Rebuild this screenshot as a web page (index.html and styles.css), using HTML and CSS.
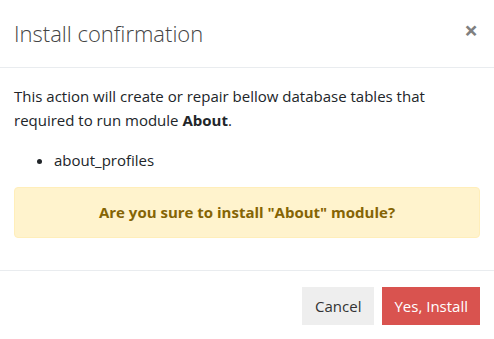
FILE: index.html
```html
<!DOCTYPE html>
<html lang="en">
<head>
    <meta charset="UTF-8">
    <title>Install confirmation</title>
    <link rel="stylesheet" href="styles.css">
</head>
<body>

<div class="modal">
    <div class="modal-header">
        <h5 class="modal-title">Install confirmation</h5>
        <span class="close">&times;</span>
    </div>
    <div class="modal-body">
        <p>This action will create or repair bellow database tables that required to run module <b>About</b>.</p>
        <ul class="tables">
            <li>about_profiles</li>
        </ul>
        <div class="alert">Are you sure to install "About" module?</div>
    </div>
    <div class="modal-footer">
        <div class="btn btn-cancel">Cancel</div>
        <div class="btn btn-danger">Yes, Install</div>
    </div>
</div>

</body>
</html>
```

FILE: styles.css
```css
html,body{
    margin: 0;
    padding: 0;
}
body{
    font-family: "Open Sans", "Noto Sans", sans-serif;
    font-size: 15px;
    line-height: 24px;
    color: #212529;
    background: #fff;
}

.modal{
    width: 494px;
}

.modal-header{
    display: flex;
    align-items: flex-start;
    justify-content: space-between;
    padding: 16px 14px 16px 14px;
    border-bottom: 1px solid #e9ecef;
}

.modal-title{
    margin: 0;
    font-size: 22px;
    font-weight: 300;
    line-height: 35px;
    color: #444;
}

.close{
    font-size: 24px;
    font-weight: 700;
    line-height: 28px;
    color: #808080;
    padding-right: 2px;
}

.modal-body{
    padding: 16px 14px;
}

.modal-body p{
    margin: 0 0 16px;
}

.tables{
    margin: 0 0 15px;
    padding-left: 40px;
}

.alert{
    margin-bottom: 16px;
    padding: 12px 20px 13px;
    border: 1px solid #ffeeba;
    border-radius: 4px;
    background: #fff3cd;
    color: #856404;
    font-weight: 700;
    text-align: center;
}

.modal-footer{
    display: flex;
    justify-content: flex-end;
    gap: 8px;
    padding: 16px 14px;
    border-top: 1px solid #e9ecef;
}

.btn{
    padding: 6px 12px;
    border: 1px solid transparent;
    line-height: 24px;
}

.btn-cancel{
    background: #eee;
    color: #333;
}

.btn-danger{
    padding: 6px 11px;
    background: #d9534f;
    color: #fff;
}
```
